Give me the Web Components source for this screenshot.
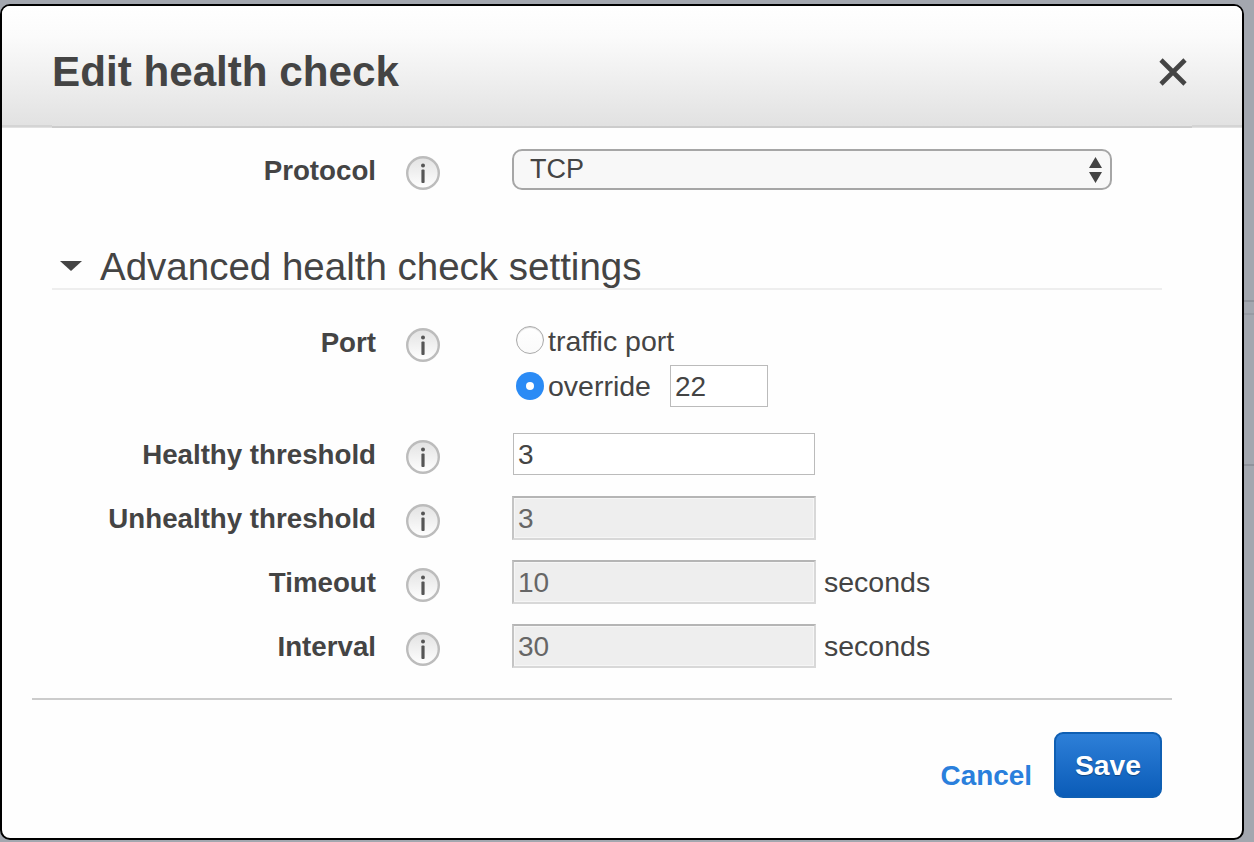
<!DOCTYPE html>
<html><head><meta charset="utf-8">
<style>
html,body{margin:0;height:100%}
body{width:1254px;height:842px;overflow:hidden;font-family:"Liberation Sans",Arial,sans-serif;color:#444;
background:linear-gradient(#8f939b,#8f939b) 0 300px/100% 2px no-repeat,linear-gradient(#979ba3,#979ba3) 0 313px/100% 2px no-repeat,linear-gradient(#8f939b,#8f939b) 0 464px/100% 2px no-repeat,#a3a7af;padding-top:4px;box-sizing:border-box}
</style></head><body>
<template id="t-modal"><style>
:host{display:flex;flex-direction:column;width:1244px;height:836px;box-sizing:border-box;border:2px solid #000;border-radius:10px;background:#fefefe;overflow:hidden}
</style><slot></slot></template>

<template id="t-header"><style>
:host{display:flex;align-items:center;justify-content:space-between;box-sizing:border-box;height:122px;padding:0 55px 0 50px;background:linear-gradient(#fff 0,#fbfbfb 25%,#e1e1e1 100%);position:relative}
h1{margin:0;font:bold 42.2px/1 "Liberation Sans",Arial,sans-serif;color:#444;position:relative;top:5px}
svg{display:block;position:relative;top:5px;filter:blur(.35px)}
.a,.b,.c{position:absolute;background:#ccc}
.b{left:50px;right:50px;bottom:0;height:2px}
.a{left:0;width:50px;bottom:1px;height:2px;background:#d4d4d4}
.c{right:0;width:50px;bottom:1px;height:2px;background:#d4d4d4}
</style><h1><slot></slot></h1>
<svg width="28" height="28" viewBox="0 0 28 28"><path d="M2 2L26 26M26 2L2 26" stroke="#444" stroke-width="4.6" fill="none"/></svg>
<i class="a"></i><i class="b"></i><i class="c"></i></template>

<template id="t-info"><style>
:host{display:block;width:34px;height:34px;filter:blur(.55px)}
svg{display:block}
</style><svg width="34" height="34" viewBox="0 0 34 34">
<defs><linearGradient id="g" x1="0" y1="0" x2="0" y2="1"><stop offset="0" stop-color="#e2e2e2"/><stop offset="1" stop-color="#fff"/></linearGradient></defs>
<circle cx="17" cy="17" r="15.8" fill="url(#g)" stroke="#bcbcbc" stroke-width="2.4"/>
<circle cx="17" cy="9.5" r="2" fill="#555"/>
<rect x="15.4" y="13.5" width="3.2" height="13.5" rx="1" fill="#555"/>
</svg></template>

<template id="t-row"><style>
:host{display:grid;grid-template-columns:374px 34px 1fr;column-gap:30px;min-height:44px;font:28.5px/44px "Liberation Sans",Arial,sans-serif;color:#444}
.l{font-weight:bold;font-size:27.7px;text-align:right;line-height:44px;position:relative;top:1px}
.i{margin-top:8px}
.f{margin-left:43px;display:flex;flex-direction:column}
</style><div class="l"><slot name="label"></slot></div><ui-info class="i"></ui-info><div class="f"><slot></slot></div></template>

<template id="t-select"><style>
:host{display:flex;align-items:center;justify-content:space-between;box-sizing:border-box;width:600px;height:41px;margin:1px 0 0 -1px;padding:0 8px 2px 16px;border:2px solid #a6a6a6;border-radius:10px;background:#f8f8f8;font:27px/36px "Liberation Sans",Arial,sans-serif;color:#444}
svg{display:block;margin-top:2px}
</style><span><slot></slot></span>
<svg width="13" height="26" viewBox="0 0 13 26"><path d="M6.5 0L13 11H0Z M0 15H13L6.5 26Z" fill="#444"/></svg></template>

<template id="t-field"><style>
:host{display:block;box-sizing:border-box;width:302px;height:42px;margin:1px 0;padding:0 4px;border:1px solid #bbb;background:#fff;font:28px/41px "Liberation Sans",Arial,sans-serif;color:#444}
:host([disabled]){width:304px;height:44px;margin:0 0 0 -1px;padding:0 4px;border:2px solid;border-color:#b5b5b5 #d8d8d8 #d8d8d8 #c4c4c4;background:#eee;box-shadow:inset 0 0 0 1px #f6f6f6;color:#666;line-height:41px}
:host([small]){width:98px}
</style><slot></slot></template>

<template id="t-radio"><style>
:host{display:flex;align-items:center;height:44px;margin-left:3px;font:28.5px/44px "Liberation Sans",Arial,sans-serif;color:#444}
.r{box-sizing:border-box;width:28px;height:28px;border-radius:50%;border:1px solid #aaa;background:linear-gradient(#fff,#fafafa);box-shadow:inset 0 1px 1px #ddd;margin-right:4px;display:flex;align-items:center;justify-content:center;flex:none}
:host([checked]) .r{background:#2b8bf5;border:none;box-shadow:none}
:host([checked]) .r::after{content:"";width:8px;height:8px;border-radius:50%;background:#fff}
.e{margin-left:19px}
:host(:not([checked])) .r{position:relative;top:-2px}
:host(:not([checked])) .t{position:relative;top:-1px}
</style><span class="r"></span><span class="t"><slot></slot></span><span class="e"><slot name="extra"></slot></span></template>

<template id="t-section"><style>
:host{display:flex;align-items:center;box-sizing:border-box;margin:52px 0 0 50px;width:1110px;height:46px;border-bottom:2px solid #eee;font:38.5px/44px "Liberation Sans",Arial,sans-serif;color:#444}
svg{display:block;margin:0 18px 0 8px;flex:none}
span{position:relative;top:1px}
</style><svg width="22" height="10" viewBox="0 0 22 10"><path d="M0 0H22L11 10Z" fill="#444"/></svg><span><slot></slot></span></template>

<template id="t-save"><style>
:host{display:flex;align-items:center;justify-content:center;box-sizing:border-box;width:108px;height:66px;padding-top:1px;border:2px solid #0f5fb3;border-radius:9px;background:linear-gradient(#2d7fd8,#0b5cb8);color:#fff;font:bold 28.3px/1 "Liberation Sans",Arial,sans-serif;text-shadow:0 1px 1px rgba(0,0,0,.35)}
</style><slot></slot></template>

<template id="t-footer"><style>
:host{display:flex;justify-content:flex-end;margin-top:32px;padding-right:80px;column-gap:22px;height:66px}
.c{color:#2a7fdc;font:bold 27.9px/1 "Liberation Sans",Arial,sans-serif;align-self:flex-end;padding-bottom:8px}
</style><span class="c"><slot name="cancel"></slot></span><slot></slot></template>

<ui-modal>
  <ui-header>Edit health check</ui-header>
  <ui-row style="margin-top:20px"><span slot="label">Protocol</span><ui-select>TCP</ui-select></ui-row>
  <ui-section>Advanced health check settings</ui-section>
  <ui-row style="margin-top:30px"><span slot="label">Port</span>
    <ui-radio>traffic port</ui-radio>
    <ui-radio checked>override<ui-field slot="extra" small>22</ui-field></ui-radio>
  </ui-row>
  <ui-row style="margin-top:24px"><span slot="label">Healthy threshold</span><ui-field>3</ui-field></ui-row>
  <ui-row style="margin-top:20px"><span slot="label">Unhealthy threshold</span><ui-field disabled>3</ui-field></ui-row>
  <ui-row style="margin-top:20px"><span slot="label">Timeout</span><ui-unit><ui-field disabled>10</ui-field>seconds</ui-unit></ui-row>
  <ui-row style="margin-top:20px"><span slot="label">Interval</span><ui-unit><ui-field disabled>30</ui-field>seconds</ui-unit></ui-row>
  <ui-divider></ui-divider>
  <ui-footer><span slot="cancel">Cancel</span><ui-save>Save</ui-save></ui-footer>
</ui-modal>

<script>
function def(name,tid){customElements.define(name,class extends HTMLElement{constructor(){super();this.attachShadow({mode:"open"}).appendChild(document.getElementById(tid).content.cloneNode(true));}});}
def("ui-modal","t-modal");def("ui-header","t-header");def("ui-info","t-info");def("ui-row","t-row");def("ui-select","t-select");def("ui-field","t-field");def("ui-radio","t-radio");def("ui-section","t-section");def("ui-save","t-save");def("ui-footer","t-footer");
customElements.define("ui-unit",class extends HTMLElement{constructor(){super();this.attachShadow({mode:"open"}).innerHTML='<style>:host{display:flex;align-items:center;column-gap:8px}</style><slot></slot>';}});
customElements.define("ui-divider",class extends HTMLElement{constructor(){super();this.attachShadow({mode:"open"}).innerHTML='<style>:host{display:block;height:2px;width:1140px;margin:30px 0 0 30px;background:#ccc}</style>';}});
</script>
</body></html>
